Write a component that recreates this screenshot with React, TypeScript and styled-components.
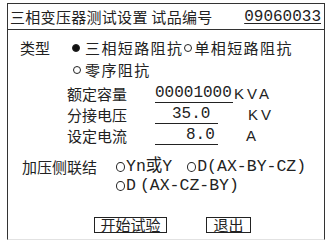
import React from "react";
import styled, { createGlobalStyle } from "styled-components";

const GlobalStyle = createGlobalStyle`
  html, body {
    margin: 0;
    padding: 0;
    background: #fff;
  }
  body {
    font-family: "Noto Sans CJK SC", "Noto Sans", sans-serif;
    color: #222;
  }
`;

const fields = [
  { label: "额定容量", value: "00001000", unit: "KVA", width: 78, pad: 0, unitGap: 1 },
  { label: "分接电压", value: "35.0", unit: "KV", width: 63, pad: 17, unitGap: 30 },
  { label: "设定电流", value: "8.0", unit: "A", width: 63, pad: 31, unitGap: 28 },
];

const App = () => {
  return (
    <>
      <GlobalStyle />
      <Frame>
        <TitleBar>
          <Title>三相变压器测试设置 试品编号</Title>
          <SerialNo>09060033</SerialNo>
        </TitleBar>

        <TypeBlock>
          <Label>类型</Label>
          <Options>
            <Option>
              <Radio checked gap={5} />
              三相短路阻抗
            </Option>
            <Option>
              <Radio gap={2} />
              单相短路阻抗
            </Option>
            <Option>
              <Radio gap={4} />
              零序阻抗
            </Option>
          </Options>
        </TypeBlock>

        <FieldList>
          {fields.map((f) => (
            <FieldRow key={f.label}>
              <FieldLabel>{f.label}</FieldLabel>
              <FieldValue width={f.width} pad={f.pad}>
                {f.value}
              </FieldValue>
              <Unit gap={f.unitGap}>{f.unit}</Unit>
            </FieldRow>
          ))}
        </FieldList>

        <ConnBlock>
          <ConnLabel>加压侧联结</ConnLabel>
          <ConnOptions>
            <ConnOption>
              <Radio small gap={1} />
              Yn或Y
            </ConnOption>
            <ConnOption>
              <Radio small gap={1} />
              D(AX-BY-CZ)
            </ConnOption>
            <ConnOption>
              <Radio small gap={1} />
              <Tight>D</Tight>(AX-CZ-BY)
            </ConnOption>
          </ConnOptions>
        </ConnBlock>

        <ButtonBar>
          <Button wide>开始试验</Button>
          <Button>退出</Button>
        </ButtonBar>
      </Frame>
    </>
  );
};

export default App;

const Frame = styled.div`
  box-sizing: border-box;
  margin: 3px 0 0 7px;
  width: 318px;
  height: 237px;
  border: 1px solid #333;
  border-bottom-color: #e2e2e2;
  display: flex;
  flex-direction: column;
`;

const TitleBar = styled.div`
  height: 25px;
  border-bottom: 1px solid #333;
  display: flex;
  align-items: center;
  padding: 0 3px 0 2px;
  font-size: 15px;
  line-height: 18px;
`;

const Title = styled.span`
  white-space: nowrap;
  letter-spacing: 0.3px;
`;

const SerialNo = styled.span`
  margin-left: auto;
  font-family: "Liberation Mono", monospace;
  font-size: 16px;
  text-decoration: underline;
  text-underline-offset: 2px;
  text-decoration-thickness: 1px;
`;

const TypeBlock = styled.div`
  display: grid;
  grid-template-columns: 52px 1fr;
  padding: 7px 0 0 12px;
  font-size: 15px;
  line-height: 22px;
`;

const Label = styled.span``;

const Options = styled.div`
  display: flex;
  flex-wrap: wrap;
  width: 232px;
  letter-spacing: 1.4px;
`;

const Option = styled.span`
  display: inline-flex;
  align-items: center;
  white-space: nowrap;
`;

const Radio = styled.span<{ checked?: boolean; small?: boolean; gap: number }>`
  box-sizing: border-box;
  display: inline-block;
  flex-shrink: 0;
  width: ${(p) => (p.small ? 9 : 8)}px;
  height: ${(p) => (p.small ? 10 : 8)}px;
  border-radius: 50%;
  border: 1px solid #222;
  background: ${(p) => (p.checked ? "#111" : "transparent")};
  margin: 0 ${(p) => p.gap}px 0 ${(p) => (p.checked ? 0 : 1)}px;
`;

const FieldList = styled.div`
  padding: 2px 0 0 59px;
  display: flex;
  flex-direction: column;
  gap: 1px;
`;

const FieldRow = styled.div`
  display: flex;
  align-items: center;
  height: 20px;
  font-size: 15px;
`;

const FieldLabel = styled.span`
  width: 88px;
`;

const FieldValue = styled.span<{ width: number; pad: number }>`
  box-sizing: border-box;
  width: ${(p) => p.width}px;
  padding-left: ${(p) => p.pad}px;
  font-family: "Liberation Mono", monospace;
  font-size: 16px;
  line-height: 18px;
  border-bottom: 1px solid #222;
`;

const Unit = styled.span<{ gap: number }>`
  margin-left: ${(p) => p.gap}px;
  font-family: "Liberation Sans", sans-serif;
  font-size: 15px;
  letter-spacing: 3px;
`;

const ConnBlock = styled.div`
  display: grid;
  grid-template-columns: 93px 1fr;
  padding: 13px 0 0 14px;
  font-size: 15px;
  line-height: 18.5px;
`;

const ConnLabel = styled.span``;

const ConnOptions = styled.div`
  display: flex;
  flex-wrap: wrap;
  column-gap: 14px;
  width: 208px;
  font-family: "Liberation Mono", "Noto Sans CJK SC", monospace;
  font-size: 16.5px;
`;

const ConnOption = styled.span`
  display: inline-flex;
  align-items: center;
  white-space: nowrap;
`;

const Tight = styled.span`
  margin-right: 4px;
`;

const ButtonBar = styled.div`
  display: flex;
  padding: 22px 0 0 86px;
  gap: 39px;
`;

const Button = styled.span<{ wide?: boolean }>`
  box-sizing: border-box;
  display: inline-flex;
  justify-content: center;
  align-items: center;
  width: ${(p) => (p.wide ? 73 : 45)}px;
  height: 16px;
  border: 1px solid #222;
  font-size: 15px;
  line-height: 14px;
`;
